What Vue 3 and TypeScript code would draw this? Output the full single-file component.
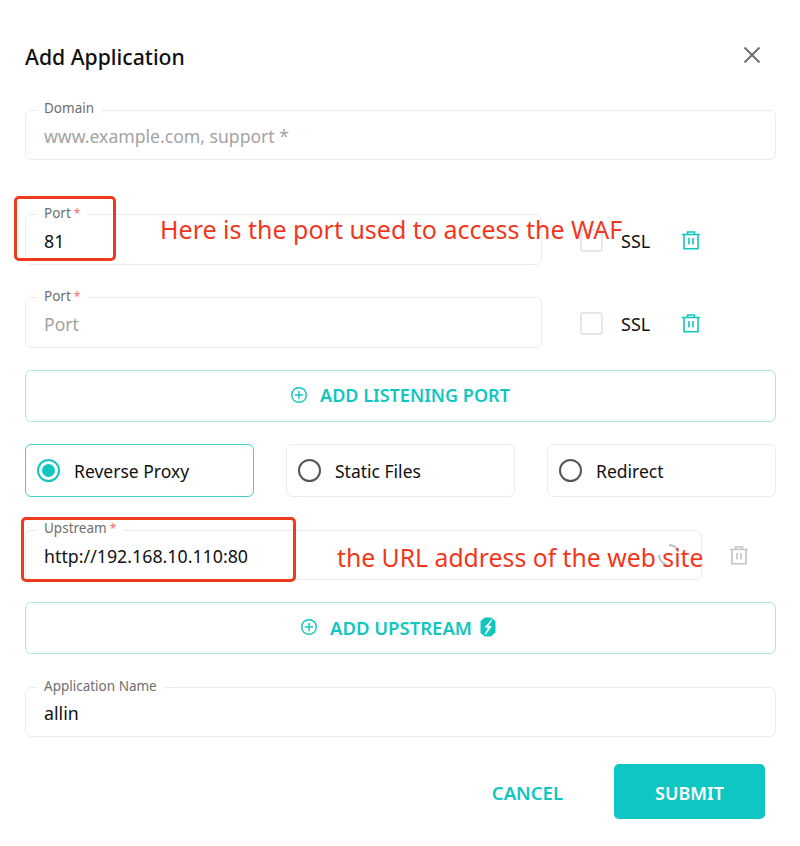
<script setup lang="ts">
const ports = [
  { value: '81', placeholder: '' },
  { value: '', placeholder: 'Port' },
]
const modes = [
  { label: 'Reverse Proxy', active: true },
  { label: 'Static Files', active: false },
  { label: 'Redirect', active: false },
]
</script>

<template>
  <div class="dialog">
    <header class="head">
      <h2 class="title">Add Application</h2>
      <svg class="close" width="24" height="24" viewBox="0 0 24 24"><path d="M4.500 4.500 19.500 19.500M19.500 4.500 4.500 19.500" fill="none" stroke="#6f6f6f" stroke-width="2"/></svg>
    </header>

    <div class="field domain">
      <span class="legend">Domain</span>
      <span class="ph">www.example.com, support *</span>
    </div>

    <div class="ports">
      <div v-for="(p, i) in ports" :key="i" class="port-row">
        <div class="field port-field">
          <span class="legend">Port<i class="req">*</i></span>
          <span v-if="p.value" class="val">{{ p.value }}</span>
          <span v-else class="ph">{{ p.placeholder }}</span>
        </div>
        <span class="check"></span>
        <span class="ssl">SSL</span>
        <svg class="trash" width="20" height="20" viewBox="0 0 20 20" fill="none" stroke="#12c6c0" stroke-width="1.600"><path d="M1 4.500H19M6.500 4V2H13.500V4M3 4.500V18.800H17V4.500M8 8V14.500M12 8V14.500"/></svg>
      </div>
    </div>

    <button class="outline add-port">
      <svg width="18" height="18" viewBox="0 0 18 18" fill="none" stroke="#12c6c0" stroke-width="1.400"><circle cx="9" cy="9" r="7.300"/><path d="M9 4.800V13.200M4.800 9H13.200"/></svg>
      <span>ADD LISTENING PORT</span>
    </button>

    <div class="modes">
      <div v-for="m in modes" :key="m.label" class="mode" :class="{ on: m.active }">
        <span class="radio"></span>
        <span>{{ m.label }}</span>
      </div>
    </div>

    <div class="up-row">
      <div class="field up-field">
        <span class="legend">Upstream<i class="req">*</i></span>
        <span class="val">http://192.168.10.110:80</span>
        <svg class="spin" width="24" height="24" viewBox="0 0 24 24" fill="none" stroke="#bdbdbd" stroke-width="2"><path d="M12 2A10 10 0 0 1 21.500 9M2 12A10 10 0 0 0 9.500 21.500"/></svg>
      </div>
      <svg class="trash" width="20" height="20" viewBox="0 0 20 20" fill="none" stroke="#c4c4c4" stroke-width="1.600"><path d="M1 4.500H19M6.500 4V2H13.500V4M3 4.500V18.800H17V4.500M8 8V14.500M12 8V14.500"/></svg>
    </div>

    <button class="outline add-up">
      <svg width="18" height="18" viewBox="0 0 18 18" fill="none" stroke="#12c6c0" stroke-width="1.400"><circle cx="9" cy="9" r="7.300"/><path d="M9 4.800V13.200M4.800 9H13.200"/></svg>
      <span>ADD UPSTREAM</span>
      <svg class="bolt" width="18" height="20" viewBox="0 0 18 20"><path d="M6 .5H12L16.500 4V15.500L12 19.500H6L1.500 16V4Z" fill="#12c6c0"/><path d="M12.500 2.500 5.500 10.500H9L5.500 17.500 6.800 17.500 13 9H9.500L13.500 2.500Z" fill="#fff"/></svg>
    </button>

    <div class="field name">
      <span class="legend">Application Name</span>
      <span class="val">allin</span>
    </div>

    <footer class="foot">
      <button class="cancel">CANCEL</button>
      <button class="submit">SUBMIT</button>
    </footer>

    <div class="mark mark-port"></div>
    <div class="mark mark-up"></div>
    <span class="note note-port">Here is the port used to access the WAF</span>
    <span class="note note-up">the URL address of the web site</span>
  </div>
</template>

<style>
html, body { background: #fff; }
</style>

<style scoped>
.dialog {
  position: relative;
  width: 800px;
  height: 846px;
  box-sizing: border-box;
  padding: 36px 24px 0 25px;
  background: #fff;
  font-family: "Noto Sans", "Open Sans", sans-serif;
  color: #111;
  display: flex;
  flex-direction: column;
  overflow: hidden;
}
.head { display: flex; align-items: center; justify-content: space-between; height: 40px; padding-right: 1px; }
.title { margin: 0; font-size: 21.200px; font-weight: 500; color: #101010; }
.close { margin-right: 11px; margin-top: -2px; }
.field {
  position: relative;
  box-sizing: border-box;
  height: 50px;
  border: 1px solid #e9edf3;
  border-radius: 6px;
  padding: 2px 18px 0;
  display: flex;
  align-items: center;
  font-size: 17.600px;
}
.legend {
  position: absolute;
  left: 11px;
  top: -13px;
  padding: 0 7px;
  background: #fff;
  font-size: 13.500px;
  line-height: 20px;
  color: #6e6e6e;
}
.port-field .legend, .name .legend { top: -12px; }
.req { font-style: normal; color: #f26a6a; font-size: 12px; margin-left: 3px; }
.ph { color: #a3a3a3; }
.val { color: #111; font-size: 17.800px; }
.domain { margin-top: 34px; }
.ports { margin-top: 54px; display: flex; flex-direction: column; gap: 32px; }
.port-row { display: flex; align-items: center; height: 51px; }
.port-field { width: 517px; height: 51px; }
.check {
  width: 19px;
  height: 19px;
  margin: 2px 0 0 38px;
  border: 2.500px solid #e3e7ee;
  border-radius: 3px;
  box-sizing: content-box;
}
.ssl { margin: 2px 0 0 18px; font-size: 18px; width: 42px; }
.port-row .trash { margin-left: 18px; }
.outline {
  display: flex;
  align-items: center;
  justify-content: center;
  height: 52px;
  box-sizing: border-box;
  border: 1px solid #a5e9e6;
  border-radius: 6px;
  background: #fff;
  color: #12c6c0;
  font-family: inherit;
  font-size: 18px;
  font-weight: 600;
  padding: 0 0 3px;
}
.add-port { margin-top: 22px; gap: 12px; padding-right: 1px; }
.add-up { margin-top: 22px; gap: 12px; padding: 0 4px 2px 0; font-size: 18.500px; }
.bolt { margin-left: -5px; }
.modes { margin-top: 22px; display: grid; grid-template-columns: repeat(3, 229px); justify-content: space-between; }
.mode {
  height: 53px;
  box-sizing: border-box;
  border: 1px solid #e9edf3;
  border-radius: 6px;
  display: flex;
  align-items: center;
  gap: 14px;
  padding-left: 11px;
  font-size: 17.500px;
}
.mode.on { border-color: #3fd2cd; }
.radio {
  width: 23px;
  height: 23px;
  margin-top: -1px;
  box-sizing: border-box;
  border-radius: 50%;
  border: 2.500px solid #555;
  position: relative;
}
.on .radio { border-color: #12c6c0; }
.on .radio::after {
  content: "";
  position: absolute;
  inset: 3px;
  border-radius: 50%;
  background: #12c6c0;
}
.up-row { margin-top: 33px; display: flex; align-items: center; gap: 27px; }
.up-field { width: 677px; }
.spin { position: absolute; right: 20px; top: 12px; }
.name { margin-top: 33px; }
.foot { margin-top: 27px; display: flex; justify-content: flex-end; align-items: center; padding-right: 11px; }
.cancel, .submit { border: 0; font-family: inherit; font-size: 18px; font-weight: 600; padding: 2px 0 0; }
.cancel { background: none; color: #12c6c0; margin-right: 51px; font-size: 18.500px; }
.submit { width: 151px; height: 55px; border-radius: 5px; background: #0fc6c2; color: #fff; }
.mark { position: absolute; border: 3px solid #ef3a1f; border-radius: 5px; box-sizing: border-box; }
.mark-port { left: 14px; top: 196px; width: 102px; height: 65px; }
.mark-up { left: 21px; top: 517px; width: 275px; height: 65px; }
.note { position: absolute; color: #f2371c; font-size: 25px; line-height: 34px; white-space: nowrap; }
.note-port { left: 160px; top: 212px; }
.note-up { left: 337px; top: 541px; font-size: 24.750px; }
</style>
